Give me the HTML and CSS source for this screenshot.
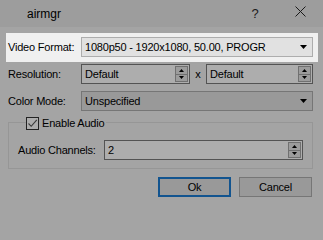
FILE: index.html
```html
<!DOCTYPE html>
<html>
<head>
<meta charset="utf-8">
<link rel="stylesheet" href="styles.css">
</head>
<body>
<div class="dialog">
  <div class="titlebar">
    <span class="title">airmgr</span>
    <span class="tbtn help">?</span>
    <span class="tbtn close"><svg width="11" height="11" viewBox="0 0 11 11"><path d="M0.5 0.5L10.5 10.5M10.5 0.5L0.5 10.5" stroke="#1a1a1a" stroke-width="1" fill="none"/></svg></span>
  </div>
  <div class="content">
    <div class="row hl">
      <span class="label">Video Format:</span>
      <div class="combo light">
        <span class="val">1080p50 - 1920x1080, 50.00, PROGR</span>
        <svg class="arrow" width="7" height="4" viewBox="0 0 7 4"><path d="M0 0H7L3.5 4Z" fill="#000"/></svg>
      </div>
    </div>
    <div class="row">
      <span class="label">Resolution:</span>
      <div class="spin res1">
        <span class="val">Default</span>
        <div class="spinner">
          <div class="sbtn"><svg width="5" height="3" viewBox="0 0 5 3"><path d="M0 3H5L2.5 0Z" fill="#000"/></svg></div>
          <div class="sbtn"><svg width="5" height="3" viewBox="0 0 5 3"><path d="M0 0H5L2.5 3Z" fill="#000"/></svg></div>
        </div>
      </div>
      <span class="times">x</span>
      <div class="spin grow">
        <span class="val">Default</span>
        <div class="spinner">
          <div class="sbtn"><svg width="5" height="3" viewBox="0 0 5 3"><path d="M0 3H5L2.5 0Z" fill="#000"/></svg></div>
          <div class="sbtn"><svg width="5" height="3" viewBox="0 0 5 3"><path d="M0 0H5L2.5 3Z" fill="#000"/></svg></div>
        </div>
      </div>
    </div>
    <div class="row">
      <span class="label">Color Mode:</span>
      <div class="combo dim">
        <span class="val">Unspecified</span>
        <svg class="arrow" width="7" height="4" viewBox="0 0 7 4"><path d="M0 0H7L3.5 4Z" fill="#000"/></svg>
      </div>
    </div>
    <div class="group">
      <div class="group-title">
        <span class="check"><svg width="11" height="11" viewBox="0 0 11 11"><path d="M1.5 5.5L4.2 8.3L9.8 1.8" stroke="#3a3a3a" stroke-width="1.1" fill="none"/></svg></span>
        <span>Enable Audio</span>
      </div>
      <div class="row ac-row">
        <span class="label2">Audio Channels:</span>
        <div class="spin grow">
          <span class="val">2</span>
          <div class="spinner">
            <div class="sbtn"><svg width="5" height="3" viewBox="0 0 5 3"><path d="M0 3H5L2.5 0Z" fill="#000"/></svg></div>
            <div class="sbtn"><svg width="5" height="3" viewBox="0 0 5 3"><path d="M0 0H5L2.5 3Z" fill="#000"/></svg></div>
          </div>
        </div>
      </div>
    </div>
    <div class="buttons">
      <button class="btn ok">Ok</button>
      <button class="btn">Cancel</button>
    </div>
  </div>
</div>
</body>
</html>
```

FILE: styles.css
```css
html, body {
  margin: 0;
  padding: 0;
}
body {
  width: 323px;
  height: 209px;
  overflow: hidden;
  background: #a4a4a4;
  font-family: "Liberation Sans", Arial, sans-serif;
  font-size: 11px;
  letter-spacing: -0.2px;
  color: #000;
}
.dialog {
  width: 323px;
  height: 209px;
  background: #a4a4a4;
}
.titlebar {
  height: 27px;
  background: #9d9d9d;
  display: flex;
  align-items: center;
}
.title {
  flex: 1;
  padding-left: 27px;
  font-size: 12px;
  letter-spacing: 0;
  padding-top: 1px;
}
.tbtn {
  width: 45px;
  height: 27px;
  display: flex;
  align-items: center;
  justify-content: center;
}
.help {
  font-size: 13px;
  letter-spacing: 0;
  color: #1a1a1a;
  padding-right: 1px;
  box-sizing: border-box;
}
.close svg {
  display: block;
  margin-top: -5px;
}
.content {
  padding: 10px 10px 0 8px;
  display: flex;
  flex-direction: column;
  gap: 7px;
}
.row {
  display: flex;
  align-items: center;
  height: 20px;
}
.hl {
  margin: -4px -5px -5px -2px;
  padding: 4px 5px 5px 2px;
  background: #f0f0f0;
}
.label {
  width: 73px;
  flex: none;
  white-space: nowrap;
}
.label2 {
  width: 86px;
  flex: none;
  white-space: nowrap;
}
.combo, .spin {
  height: 20px;
  box-sizing: border-box;
  border: 1px solid;
  display: flex;
  align-items: center;
  padding-left: 3px;
  white-space: nowrap;
}
.combo {
  flex: 1;
}
.combo.light {
  background: #e1e1e1;
  border-color: #adadad;
}
.combo.dim {
  background: #999999;
  border-color: #767676;
}
.arrow {
  display: block;
  margin-left: auto;
  margin-right: 5px;
}
.spin {
  background: #adadad;
  border-color: #535353;
}
.res1 {
  width: 109px;
  flex: none;
}
.grow {
  flex: 1;
}
.times {
  width: 16px;
  text-align: center;
  flex: none;
}
.spinner {
  margin-left: auto;
  margin-right: 1px;
  width: 13px;
  height: 16px;
  box-sizing: border-box;
  border: 1px solid #707070;
  background: #9c9c9c;
  display: flex;
  flex-direction: column;
}
.sbtn {
  flex: 1;
  display: flex;
  align-items: center;
  justify-content: center;
}
.sbtn + .sbtn {
  border-top: 1px solid #707070;
}
.sbtn svg {
  display: block;
}
.group {
  margin-top: 4px;
  border: 1px solid #969696;
  padding: 0 9px 8px 9px;
}
.group-title {
  margin-top: -7px;
  margin-left: 8px;
  height: 14px;
  display: flex;
  align-items: center;
  gap: 3px;
  width: fit-content;
  background: #a4a4a4;
  padding-right: 2px;
}
.check {
  width: 13px;
  height: 13px;
  box-sizing: border-box;
  border: 1px solid #232323;
  background: #adadad;
  display: flex;
  align-items: center;
  justify-content: center;
}
.check svg {
  display: block;
}
.ac-row {
  margin-top: 10px;
}
.buttons {
  margin-top: 1px;
  margin-right: 1px;
  display: flex;
  justify-content: flex-end;
  gap: 8px;
}
.btn {
  width: 73px;
  height: 20px;
  box-sizing: border-box;
  border: 1px solid #767676;
  background: #999999;
  font-family: "Liberation Sans", Arial, sans-serif;
  font-size: 11px;
  letter-spacing: -0.2px;
  color: #000;
  padding: 0;
  margin: 0;
}
.btn.ok {
  border: 2px solid #12548f;
}
```
